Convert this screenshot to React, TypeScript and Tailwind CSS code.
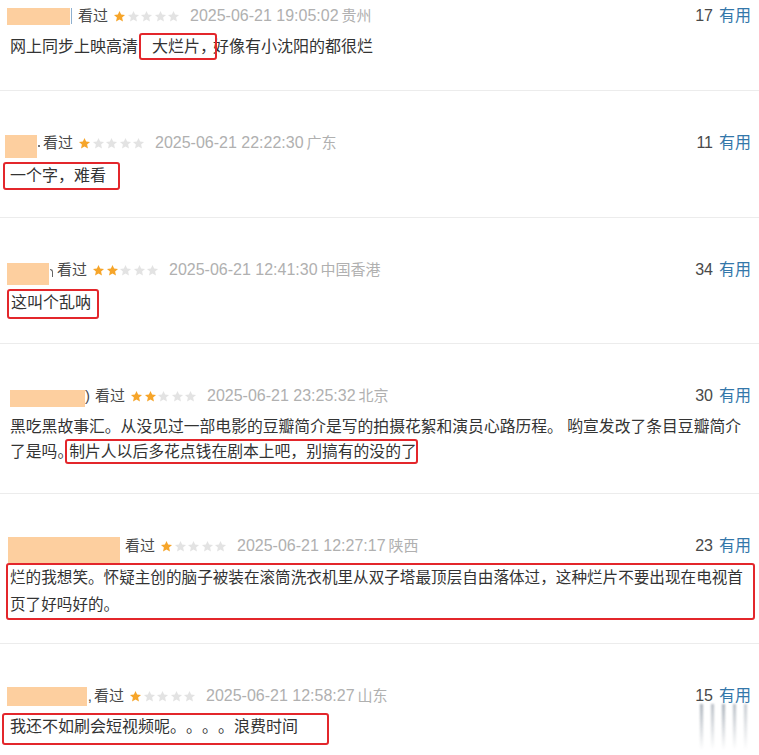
import { ReactNode } from "react";

function Star({ on }: { on: boolean }) {
  return (
    <svg viewBox="0 0 24 24" className="w-[13px] h-[13px]">
      <path
        d="M12 1.8l3 6.6 7.2.7-5.4 4.9 1.6 7.1L12 17.4l-6.4 3.7 1.6-7.1L1.8 9.1 9 8.4z"
        fill={on ? "#f6a52a" : "#e3e3e3"}
      />
    </svg>
  );
}

interface HeadProps {
  name: ReactNode;
  stars: number;
  date: string;
  loc: string;
  count: number;
}

function Head({ name, stars, date, loc, count }: HeadProps) {
  return (
    <div className="flex items-center h-[22px] leading-[22px]">
      {name}
      <span className="text-[15px] text-[#494949]">看过</span>
      <span className="ml-[5px] flex gap-[0.5px]">
        {[0, 1, 2, 3, 4].map((i) => (
          <Star key={i} on={i < stars} />
        ))}
      </span>
      <span className="ml-[10px] text-[16px] text-[#b0b0b0]">{date}</span>
      <span className="ml-[3px] text-[15px] text-[#b0b0b0]">{loc}</span>
      <span className="ml-auto text-[16px] text-[#494949]">{count}</span>
      <span className="ml-[6px] text-[16px] text-[#3377aa]">有用</span>
    </div>
  );
}

// red annotation frame laid over a piece of text
function Mark({ cls }: { cls: string }) {
  return <span className={`absolute border-2 border-[#e3262b] rounded-[3px] ${cls}`} />;
}

const peach = "bg-[#fdcf9f] shrink-0";

export default function App() {
  return (
    <div className="w-[759px] h-[755px] overflow-hidden bg-white [text-spacing-trim:space-all] font-['Liberation_Sans','Noto_Sans_CJK_SC',sans-serif]">
      {/* 1 */}
      <div className="h-[91px] pl-[10px] pr-[8px] pt-[5px] border-b border-[#ececec]">
        <Head
          name={
            <>
              <span className={`${peach} -ml-[3px] w-[63px] h-[17px]`} />
              <span className="ml-[1px] w-[1px] h-[16px] bg-[#8fb0cf]" />
              <span className="ml-[6px]" />
            </>
          }
          stars={1}
          date="2025-06-21 19:05:02"
          loc="贵州"
          count={17}
        />
        <div className="mt-[7px] text-[16px] leading-[26px] text-[#333] whitespace-nowrap">
          网上同步上映高清
          <span className="relative inline-block ml-[14px]">
            大烂片，
            <Mark cls="-left-[13px] -right-[1px] -top-[1px] bottom-0" />
          </span>
          <span className="-ml-[3px]">好像有小沈阳的都很烂</span>
        </div>
      </div>

      {/* 2 */}
      <div className="h-[127px] pl-[10px] pr-[8px] pt-[41px] border-b border-[#ececec]">
        <Head
          name={
            <>
              <span className={`${peach} -ml-[5px] mt-[6px] w-[32px] h-[23px]`} />
              <span className="ml-[1px] w-[2px] h-[2px] mt-[6px] bg-[#777]" />
              <span className="ml-[3px]" />
            </>
          }
          stars={1}
          date="2025-06-21 22:22:30"
          loc="广东"
          count={11}
        />
        <div className="mt-[9px] text-[16px] leading-[26px] text-[#333] whitespace-nowrap">
          <span className="relative inline-block">
            一个字，难看
            <Mark cls="-left-[7px] -right-[14px] -top-[1px] -bottom-[1px]" />
          </span>
        </div>
      </div>

      {/* 3 */}
      <div className="h-[126px] pl-[10px] pr-[8px] pt-[41px] border-b border-[#ececec]">
        <Head
          name={
            <>
              <span className={`${peach} -ml-[3px] mt-[8px] w-[42px] h-[22px]`} />
              <span className="ml-[1px] mt-[5px] w-[3px] h-[8px] border-r-[1.5px] border-t-[1.5px] border-[#666] rounded-tr-[3px]" />
              <span className="ml-[4px]" />
            </>
          }
          stars={2}
          date="2025-06-21 12:41:30"
          loc="中国香港"
          count={34}
        />
        <div className="mt-[9px] text-[16px] leading-[26px] text-[#333] whitespace-nowrap">
          <span className="relative inline-block ml-[1px]">
            这叫个乱呐
            <Mark cls="-left-[4px] -right-[8px] -top-[1px] -bottom-[3px]" />
          </span>
        </div>
      </div>

      {/* 4 */}
      <div className="h-[150px] pl-[10px] pr-[8px] pt-[41px] border-b border-[#ececec]">
        <Head
          name={
            <>
              <span className={`${peach} mt-[4px] w-[75px] h-[17px]`} />
              <span className="flex justify-end w-[5px] overflow-hidden text-[15px] text-[#494949]">)</span>
              <span className="ml-[5px]" />
            </>
          }
          stars={2}
          date="2025-06-21 23:25:32"
          loc="北京"
          count={30}
        />
        <div className="mt-[7px] text-[15.8px] leading-[25px] text-[#333] whitespace-nowrap">
          <div>黑吃黑故事汇。从没见过一部电影的豆瓣简介是写的拍摄花絮和演员心路历程。 哟宣发改了条目豆瓣简介</div>
          <div>
            了是吗。
            <span className="relative inline-block -ml-[4px]">
              制片人以后多花点钱在剧本上吧，别搞有的没的了
              <Mark cls="-left-[4px] -right-[1px] top-0 bottom-0" />
            </span>
          </div>
        </div>
      </div>

      {/* 5 */}
      <div className="h-[150px] pl-[10px] pr-[8px] pt-[41px] border-b border-[#ececec]">
        <Head
          name={
            <>
              <span className={`${peach} -ml-[2px] mt-[8px] w-[112px] h-[26px]`} />
              <span className="ml-[5px]" />
            </>
          }
          stars={1}
          date="2025-06-21 12:27:17"
          loc="陕西"
          count={23}
        />
        <div className="mt-[6px] -ml-[4px] -mr-[4px] pl-[2px] border-2 border-[#e3262b] rounded-[3px] text-[15.6px] leading-[27px] text-[#333] whitespace-nowrap">
          <div className="-mt-[1px]">烂的我想笑。怀疑主创的脑子被装在滚筒洗衣机里从双子塔最顶层自由落体过，这种烂片不要出现在电视首</div>
          <div>页了好吗好的。</div>
        </div>
      </div>

      {/* 6 */}
      <div className="relative h-[112px] pl-[10px] pr-[8px] pt-[41px]">
        <Head
          name={
            <>
              <span className={`${peach} -ml-[3px] w-[80px] h-[19px]`} />
              <span className="flex justify-end w-[5px] overflow-hidden text-[15px] text-[#494949]">,</span>
              <span className="ml-[2px]" />
            </>
          }
          stars={1}
          date="2025-06-21 12:58:27"
          loc="山东"
          count={15}
        />
        <div className="mt-[7px] text-[16px] leading-[26px] text-[#333] whitespace-nowrap">
          <span className="relative inline-block">
            我还不如刷会短视频呢。。。。浪费时间
            <Mark cls="-left-[8px] -right-[31px] -top-[1px] -bottom-[5px]" />
          </span>
        </div>
        {/* watermark streaks */}
        <div className="absolute right-[12px] top-[60px] flex gap-[8px]">
          <span className="w-[3px] h-[46px] bg-linear-to-b from-[#6f7b8a] to-transparent opacity-60 blur-[1px]" />
          <span className="w-[3px] h-[46px] bg-linear-to-b from-[#6f7b8a] to-transparent opacity-50 blur-[1px]" />
          <span className="w-[3px] h-[46px] bg-linear-to-b from-[#6f7b8a] to-transparent opacity-60 blur-[1px]" />
          <span className="w-[3px] h-[46px] bg-linear-to-b from-[#6f7b8a] to-transparent opacity-50 blur-[1px]" />
          <span className="w-[3px] h-[46px] bg-linear-to-b from-[#6f7b8a] to-transparent opacity-40 blur-[1px]" />
        </div>
      </div>
    </div>
  );
}
